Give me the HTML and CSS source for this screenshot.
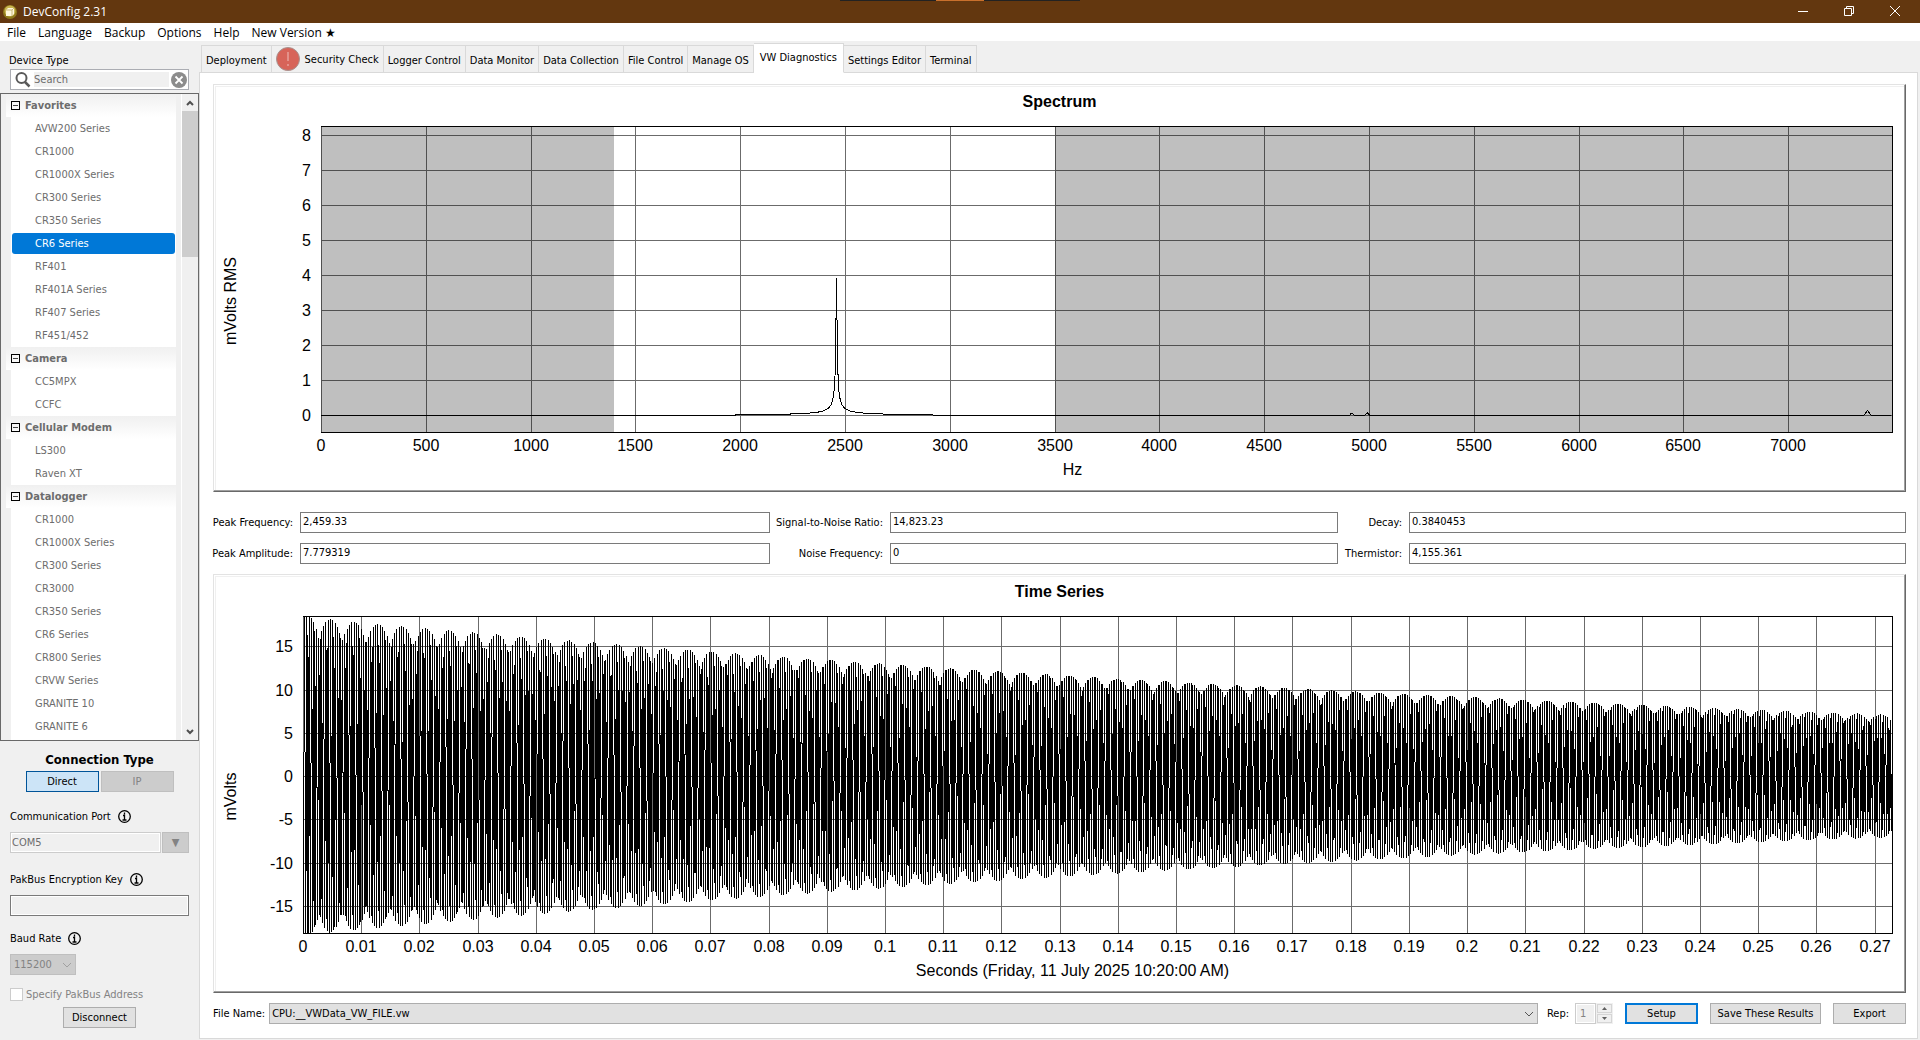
FILE: index.html
```html
<!DOCTYPE html>
<html lang="en">

<head>
  <meta charset="UTF-8" />
  <title>DevConfig 2.31</title>
  <link rel="stylesheet" href="styles.css">
</head>

<body>
  <!-- title bar -->
  <header class="titlebar">
    <svg class="app-icon" width="14" height="14" viewBox="0 0 14 14">
      <circle cx="7" cy="7" r="7" fill="#8f7a1c" />
      <circle cx="7" cy="6" r="5.5" fill="#c9b552" />
      <path d="M3 5l2-2h6v6l-2 2H3z" fill="#fff8dc" />
      <path d="M3 5h6v6M9 5l2-2" fill="none" stroke="#b9a660" stroke-width="0.8" />
    </svg>
    <span class="app-name">DevConfig 2.31</span>
    <div class="snap"></div>
    <div class="win-buttons">
      <button type="button" aria-label="Minimize"><svg width="10" height="10" viewBox="0 0 10 10"><path d="M0 5.5h10" /></svg></button>
      <button type="button" aria-label="Restore"><svg width="10" height="10" viewBox="0 0 10 10"><path d="M.5 2.5h7v7h-7zM2.5 2.5v-2h7v7h-2" /></svg></button>
      <button type="button" aria-label="Close"><svg width="10" height="10" viewBox="0 0 10 10"><path d="M0 0l10 10M10 0L0 10" /></svg></button>
    </div>
  </header>

  <nav class="menubar">
    <a href="#">File</a>
    <a href="#">Language</a>
    <a href="#">Backup</a>
    <a href="#">Options</a>
    <a href="#">Help</a>
    <a href="#">New Version ★</a>
  </nav>

  <div class="main">
    <aside class="sidebar">
      <label class="side-label" for="search">Device Type</label>
      <div class="search">
        <svg width="18" height="18" viewBox="0 0 18 18">
          <circle cx="7.500" cy="7" r="5" fill="none" stroke="#5a5a5a" stroke-width="2" />
          <path d="M11 11l4.500 4.500" stroke="#5a5a5a" stroke-width="2.500" />
        </svg>
        <input id="search" type="text" placeholder="Search" disabled>
        <button type="button" aria-label="Clear search" disabled>
          <svg width="16" height="16" viewBox="0 0 16 16">
            <circle cx="8" cy="8" r="8" fill="#8c8c8c" />
            <path d="M4.500 4.500l7 7M11.500 4.500l-7 7" stroke="#fff" stroke-width="1.800" />
          </svg>
        </button>
      </div>

      <div class="tree">
        <div class="tree-list">
          <h3><i></i>Favorites</h3>
          <ul>
            <li>AVW200 Series</li>
            <li>CR1000</li>
            <li>CR1000X Series</li>
            <li>CR300 Series</li>
            <li>CR350 Series</li>
            <li class="current">CR6 Series</li>
            <li>RF401</li>
            <li>RF401A Series</li>
            <li>RF407 Series</li>
            <li>RF451/452</li>
          </ul>
          <h3><i></i>Camera</h3>
          <ul>
            <li>CC5MPX</li>
            <li>CCFC</li>
          </ul>
          <h3><i></i>Cellular Modem</h3>
          <ul>
            <li>LS300</li>
            <li>Raven XT</li>
          </ul>
          <h3><i></i>Datalogger</h3>
          <ul class="last">
            <li>CR1000</li>
            <li>CR1000X Series</li>
            <li>CR300 Series</li>
            <li>CR3000</li>
            <li>CR350 Series</li>
            <li>CR6 Series</li>
            <li>CR800 Series</li>
            <li>CRVW Series</li>
            <li>GRANITE 10</li>
            <li>GRANITE 6</li>
          </ul>
        </div>
        <div class="scrollbar">
          <button type="button" aria-label="Scroll up"><svg width="8" height="6" viewBox="0 0 8 6"><path d="M1 5l3-3 3 3" /></svg></button>
          <div class="thumb"></div>
          <button type="button" aria-label="Scroll down"><svg width="8" height="6" viewBox="0 0 8 6"><path d="M1 1l3 3 3-3" /></svg></button>
        </div>
      </div>

      <div class="connection">
        <h2>Connection Type</h2>
        <div class="toggle">
          <button type="button" class="btn on">Direct</button>
          <button type="button" class="btn off" disabled>IP</button>
        </div>

        <div class="caption">
          <label for="port">Communication Port</label>
          <svg class="info" width="13" height="13" viewBox="0 0 13 13"><circle cx="6.500" cy="6.500" r="5.800" /><path d="M6.500 2.500v2M5 5.500h1.500v4.500M4.500 10h4" /></svg>
        </div>
        <div class="port">
          <input id="port" type="text" value="COM5" disabled>
          <button type="button" aria-label="Choose port" disabled>▼</button>
        </div>

        <div class="caption">
          <label for="key">PakBus Encryption Key</label>
          <svg class="info" width="13" height="13" viewBox="0 0 13 13"><circle cx="6.500" cy="6.500" r="5.800" /><path d="M6.500 2.500v2M5 5.500h1.500v4.500M4.500 10h4" /></svg>
        </div>
        <input id="key" class="key" type="text">

        <div class="caption baud-caption">
          <label for="baud">Baud Rate</label>
          <svg class="info" width="13" height="13" viewBox="0 0 13 13"><circle cx="6.500" cy="6.500" r="5.800" /><path d="M6.500 2.500v2M5 5.500h1.500v4.500M4.500 10h4" /></svg>
        </div>
        <div class="drop baud">
          <select id="baud" disabled><option>115200</option></select>
          <svg width="10" height="6" viewBox="0 0 10 6"><path d="M1 1l4 4 4-4" /></svg>
        </div>

        <label class="check"><input type="checkbox" disabled>Specify PakBus Address</label>
        <button type="button" class="btn disconnect">Disconnect</button>
      </div>
    </aside>

    <section class="content">
      <div class="tabs">
        <button type="button">Deployment</button>
        <button type="button" class="warn">
          <svg width="24" height="24" viewBox="0 0 24 24">
            <circle cx="12" cy="12" r="11.500" fill="#d76459" stroke="#a8928f" />
            <path d="M12 5v9M12 17v2" stroke="#e8a19a" stroke-width="1.500" />
          </svg>
          Security Check
        </button>
        <button type="button">Logger Control</button>
        <button type="button">Data Monitor</button>
        <button type="button">Data Collection</button>
        <button type="button">File Control</button>
        <button type="button">Manage OS</button>
        <button type="button" class="current">VW Diagnostics</button>
        <button type="button">Settings Editor</button>
        <button type="button">Terminal</button>
      </div>

      <div class="pane">
        <div class="chart spectrum"><svg id="spectrum"></svg></div>

        <div class="readings">
          <label for="freq">Peak Frequency:</label><input id="freq" type="text" value="2,459.33" readonly>
          <label for="snr">Signal-to-Noise Ratio:</label><input id="snr" type="text" value="14,823.23" readonly>
          <label for="decay">Decay:</label><input id="decay" type="text" value="0.3840453" readonly>
          <label for="ampl">Peak Amplitude:</label><input id="ampl" type="text" value="7.779319" readonly>
          <label for="noise">Noise Frequency:</label><input id="noise" type="text" value="0" readonly>
          <label for="therm">Thermistor:</label><input id="therm" type="text" value="4,155.361" readonly>
        </div>

        <div class="chart series"><svg id="series"></svg></div>

        <div class="footer">
          <label for="file">File Name:</label>
          <div class="drop file">
            <select id="file"><option>CPU:__VWData_VW_FILE.vw</option></select>
            <svg width="10" height="6" viewBox="0 0 10 6"><path d="M1 1l4 4 4-4" /></svg>
          </div>
          <label for="rep">Rep:</label>
          <div class="spin">
            <input id="rep" type="number" value="1" disabled>
            <div>
              <button type="button" aria-label="Next rep" disabled><svg width="5" height="3" viewBox="0 0 5 3"><path d="M0 3l2.500-3L5 3z" /></svg></button>
              <button type="button" aria-label="Previous rep" disabled><svg width="5" height="3" viewBox="0 0 5 3"><path d="M0 0l2.500 3L5 0z" /></svg></button>
            </div>
          </div>
          <button type="button" class="btn primary">Setup</button>
          <button type="button" class="btn save">Save These Results</button>
          <button type="button" class="btn">Export</button>
        </div>
      </div>
    </section>
  </div>
  <script src="charts.js"></script>
</body>

</html>
```
FILE: styles.css
```css
* {
  box-sizing: border-box;
  margin: 0;
  padding: 0;
}

body {
  display: flex;
  flex-direction: column;
  height: 100vh;
  overflow: hidden;
  background: #f0f0f0;
  color: #000;
  font: 11px/13px "DejaVu Sans Condensed", "Noto Sans", sans-serif;
}

button,
input,
select {
  font: inherit;
  color: inherit;
  border-radius: 0;
}

ul {
  list-style: none;
}

/* title bar */
.titlebar {
  display: flex;
  align-items: center;
  height: 23px;
  padding-left: 3px;
  background: #63370f;
  color: #fff;
  font: 12px/16px "Open Sans", sans-serif;
  position: relative;
}

.app-name {
  flex: 1;
  margin-left: 6px;
}

.snap {
  position: absolute;
  top: 0;
  left: 43.75%;
  width: 240px;
  height: 1px;
  background: linear-gradient(90deg, #222 96px, #c9702c 96px, #c9702c 144px, #222 144px);
}

.win-buttons {
  display: flex;
  padding-right: 2px;
}

.win-buttons button {
  width: 46px;
  height: 23px;
  padding-bottom: 2px;
  background: none;
  border: 0;
}

.win-buttons svg {
  fill: none;
  stroke: #fff;
  display: block;
  margin: 0 auto;
}

/* menu */
.menubar {
  display: flex;
  gap: 12px;
  height: 18px;
  padding-left: 7px;
  background: #fff;
  font: 12px/19px "Open Sans", "DejaVu Sans", sans-serif;
}

.menubar a {
  color: #000;
  text-decoration: none;
}

.main {
  display: flex;
  flex: 1;
  min-height: 0;
}

/* left column */
.sidebar {
  display: flex;
  flex-direction: column;
  width: 199px;
}

.side-label {
  padding: 13px 0 2px 9px;
}

.search {
  display: flex;
  align-items: center;
  height: 21px;
  margin: 0 10px 3px;
  padding: 0 1px 0 3px;
  background: #fff;
  border: 1px solid #abadb3;
}

.search input {
  flex: 1;
  width: 0;
  height: 15px;
  margin: 0 2px;
  border: 0;
  background: #f0f0f0;
}

.search input::placeholder {
  color: #6d6d6d;
}

.search button {
  border: 0;
  background: none;
  height: 16px;
}

.tree {
  display: flex;
  flex: 1;
  min-height: 0;
  border: 1px solid #696969;
}

.tree-list {
  display: flex;
  flex-direction: column;
  flex: 1;
  margin: 0 5px;
  color: #6d6d6d;
  line-height: 23px;
  overflow: hidden;
}

.tree-list h3 {
  display: flex;
  align-items: center;
  flex: none;
  height: 23px;
  padding-left: 5px;
  background: linear-gradient(#f0f0f0, #fff);
  font-size: 11px;
  font-weight: bold;
}

.tree-list i {
  width: 9px;
  height: 9px;
  margin-right: 5px;
  border: 1px solid #000;
  background: linear-gradient(#444, #444) center / 5px 1px no-repeat;
}

.tree-list ul {
  margin-left: 5px;
  background: #fff;
}

.tree-list .last {
  flex: 1;
}

.tree-list li {
  height: 23px;
  padding-left: 24px;
}

.tree-list li.current {
  height: 21px;
  margin: 1px;
  padding-left: 23px;
  line-height: 21px;
  border-radius: 3px;
  background: #0078d7;
  color: #fff;
}

.scrollbar {
  display: flex;
  flex-direction: column;
  justify-content: space-between;
  width: 17px;
  border-left: 1px solid #fff;
}

.scrollbar button {
  height: 17px;
  border: 0;
  background: none;
}

.scrollbar svg {
  display: block;
  margin: 0 auto;
  fill: none;
  stroke: #505050;
  stroke-width: 2;
}

.thumb {
  height: 146px;
  margin-bottom: auto;
  background: #cdcdcd;
}

/* connection settings */
.connection {
  display: flex;
  flex-direction: column;
  padding: 11px 10px 12px;
}

.connection h2 {
  font-size: 13px;
  line-height: 15px;
  text-align: center;
}

.btn {
  height: 21px;
  min-width: 73px;
  border: 1px solid #adadad;
  background: #e1e1e1;
}

.btn.on {
  border-color: #005499;
  background: #cce4f7;
}

.btn.off {
  border-color: #bfbfbf;
  background: #ccc;
  color: #838383;
}

.btn.primary {
  border: 2px solid #0078d7;
}

.toggle {
  display: flex;
  justify-content: center;
  gap: 2px;
  margin: 4px 0 17px;
}

.caption {
  display: flex;
  align-items: center;
  gap: 7px;
  height: 15px;
  margin-bottom: 8px;
}

.info {
  fill: none;
  stroke: #000;
  stroke-width: 1.3;
}

.port {
  display: flex;
  gap: 1px;
  margin-bottom: 19px;
}

.port input {
  flex: 1;
  width: 0;
  height: 21px;
  padding-left: 1px;
  border: 1px solid #ccc;
  background: #f0f0f0;
  color: #6d6d6d;
  box-shadow: inset 0 0 0 1px #fff;
}

.port button {
  width: 27px;
  border: 1px solid #bfbfbf;
  background: #ccc;
  color: #838383;
}

.key {
  height: 21px;
  border: 1px solid #7a7a7a;
  background: #f0f0f0;
  box-shadow: inset 0 0 0 1px #fff;
}

.baud-caption {
  margin-top: 15px;
}

/* drop-downs */
.drop {
  display: grid;
  align-items: center;
}

.drop select,
.drop svg {
  grid-area: 1 / 1;
}

.drop select {
  appearance: none;
  width: 100%;
  height: 21px;
  padding-left: 3px;
  border: 1px solid #adadad;
  background: #e1e1e1;
}

.drop svg {
  justify-self: end;
  margin-right: 4px;
  fill: none;
  stroke: #555;
  pointer-events: none;
}

.baud {
  width: 66px;
  margin-bottom: 13px;
}

.baud select {
  border-color: #bfbfbf;
  background: #ccc;
  color: #838383;
  opacity: 1;
}

.baud svg {
  stroke: #a0a0a0;
}

.check {
  display: flex;
  align-items: center;
  gap: 3px;
  color: #838383;
}

.check input {
  appearance: none;
  width: 13px;
  height: 13px;
  border: 1px solid #ccc;
  background: #fff;
}

.disconnect {
  align-self: center;
  margin-top: 6px;
}

/* tabs */
.content {
  display: flex;
  flex-direction: column;
  flex: 1;
  min-width: 0;
  padding: 2px 2px 1px 0;
}

.tabs {
  display: flex;
  align-items: flex-end;
  padding-left: 2px;
}

.tabs button {
  height: 28px;
  margin-bottom: -1px;
  padding: 3px 4px 0;
  border: 1px solid #d9d9d9;
  border-left-width: 0;
  background: #f0f0f0;
  white-space: nowrap;
}

.tabs button:first-child {
  border-left-width: 1px;
}

.tabs .warn {
  display: flex;
  align-items: center;
  gap: 5px;
  padding: 0 4px;
}

.tabs .current {
  height: 30px;
  padding: 0 6px 1px;
  border-bottom-color: #fff;
  background: #fff;
  z-index: 1;
}

.pane {
  display: flex;
  flex-direction: column;
  flex: 1;
  min-height: 0;
  padding: 11px 11px 14px 13px;
  border: 1px solid #d9d9d9;
  background: #fff;
}

/* charts */
.chart {
  min-height: 0;
  border: 1px solid #e3e3e3;
  border-right-color: #696969;
  border-bottom-color: #696969;
  box-shadow: inset -1px -1px #a0a0a0, inset 1px 1px #fff, inset 2px 2px #f0f0f0;
}

.spectrum {
  flex: 407 1 0;
}

.series {
  flex: 419 1 0;
}

.chart svg {
  display: block;
  width: 100%;
  height: 100%;
  font: 16px "Liberation Sans", sans-serif;
}

.chart-title {
  font-weight: bold;
}

.grid {
  fill: none;
  stroke: #6b6b6b;
  shape-rendering: crispEdges;
}

.band {
  fill: #000;
  opacity: 0.25;
  shape-rendering: crispEdges;
}

.frame,
.trace {
  fill: none;
  stroke: #000;
  shape-rendering: crispEdges;
}

/* results */
.readings {
  display: grid;
  grid-template-columns: 81px 470fr 106px 448fr 57px 497fr;
  align-items: center;
  gap: 10px 7px;
  margin: 20px 0 10px -1px;
}

.readings label {
  justify-self: end;
  white-space: nowrap;
}

.readings input {
  width: 100%;
  height: 21px;
  padding: 0 2px 2px;
  border: 1px solid #7a7a7a;
}

.footer {
  display: flex;
  align-items: center;
  gap: 12px;
  margin-top: 10px;
}

.file {
  flex: 1;
  margin: 0 -3px 0 -8px;
}

.file select {
  padding-left: 2px;
}

.spin {
  display: flex;
  height: 21px;
  margin-left: -6px;
}

.spin input {
  appearance: textfield;
  width: 21px;
  padding-left: 4px;
  border: 1px solid #ccc;
  background: #f0f0f0;
  color: #838383;
  box-shadow: inset 0 0 0 1px #fff;
}

.spin input::-webkit-inner-spin-button {
  appearance: none;
}

.spin div {
  display: grid;
  width: 17px;
  background: #f0f0f0;
  gap: 1px;
  padding: 1px;
}

.spin button {
  display: grid;
  place-items: center;
  border: 1px solid #d5d5d5;
  background: #f0f0f0;
}

.spin svg {
  fill: #606060;
}

.save {
  width: 111px;
}
```
FILE: charts.js
```js
var NS = "http://www.w3.org/2000/svg";

// append an svg element to parent
function add(parent, name, attrs, text) {
  var el = document.createElementNS(NS, name);
  for (var key in attrs) {
    el.setAttribute(key, attrs[key]);
  }
  if (text !== undefined) {
    el.textContent = text;
  }
  parent.appendChild(el);
  return el;
}

function drawChart(id, opt) {
  var svg = document.getElementById(id);
  svg.innerHTML = "";
  var w = svg.clientWidth;
  var h = svg.clientHeight;
  var left = opt.left;
  var right = w - 13;
  var top = 41;
  var bottom = h - 59;

  function px(v) {
    return left + (v / opt.xMax) * (right - left);
  }
  function py(v) {
    return bottom - ((v - opt.yMin) / (opt.yMax - opt.yMin)) * (bottom - top);
  }

  // grid lines and tick labels
  var d = "";
  for (var i = 0; i * opt.xStep <= opt.xMax; i++) {
    var x = Math.round(px(i * opt.xStep));
    d += "M" + (x + 0.5) + " " + top + "V" + bottom;
    add(svg, "text", { x: x, y: bottom + 19, "text-anchor": "middle" }, +(i * opt.xStep).toFixed(2));
  }
  for (var v = opt.yFirst; v <= opt.yMax; v += opt.yStep) {
    var y = Math.round(py(v));
    d += "M" + left + " " + (y + 0.5) + "H" + right;
    add(svg, "text", { x: left - 10, y: y + 6, "text-anchor": "end" }, v);
  }
  add(svg, "path", { d: d, "class": "grid" });

  // shaded ranges outside of the sweep
  opt.bands.forEach(function (b) {
    add(svg, "rect", { x: px(b[0]), y: top, width: px(b[1]) - px(b[0]), height: bottom - top, "class": "band" });
  });

  var clip = add(svg, "clipPath", { id: id + "-clip" });
  add(clip, "rect", { x: left, y: top, width: right - left, height: bottom - top });
  var points = opt.points().map(function (p) {
    return px(p[0]).toFixed(1) + "," + py(p[1]).toFixed(1);
  });
  add(svg, "polyline", { points: points.join(" "), "class": "trace", "clip-path": "url(#" + id + "-clip)" });
  add(svg, "path", { d: "M" + left + " " + (top + 0.5) + "H" + (right + 0.5) + "V" + (bottom + 0.5) + "H" + left, "class": "frame" });

  // titles
  var middle = (top + bottom) / 2 + 22;
  add(svg, "text", { x: w / 2, y: 22, "text-anchor": "middle", "class": "chart-title" }, opt.title);
  add(svg, "text", { x: w / 2 + 13, y: h - 16, "text-anchor": "middle" }, opt.xTitle);
  add(svg, "text", { x: 0, y: 0, "text-anchor": "middle", transform: "translate(22 " + middle + ") rotate(-90)" }, opt.yTitle);
}

// single narrow peak with long skirts
function spectrumPoints() {
  var list = [];
  for (var f = 0; f <= 7495; f += 3.66) {
    var v = Math.min(3.92, 7.9 / Math.abs(f - 2459.33));
    if (f > 1980 && f < 2920) {
      v = Math.max(v, 0.03);
    } else {
      v = 0;
    }
    v += Math.max(0, 0.07 - Math.abs(f - 4918) / 150);
    v += Math.max(0, 0.07 - Math.abs(f - 4992) / 150);
    v += Math.max(0, 0.14 - Math.abs(f - 7378) / 120);
    list.push([f, v]);
  }
  return list;
}

// decaying sine sampled at 15 kHz
function seriesPoints() {
  var list = [];
  for (var n = 0; n < 4096; n++) {
    var t = n / 15000;
    var a = n < 40 ? 18.8 : 18.4;
    list.push([t, a * Math.exp(-3.5 * t) * Math.sin(2 * Math.PI * (2459.33 * t + 0.609))]);
  }
  return list;
}

function draw() {
  drawChart("spectrum", {
    title: "Spectrum", xTitle: "Hz", yTitle: "mVolts RMS",
    left: 107,
    xMax: 7495, xStep: 500,
    yMin: -0.48, yMax: 8.27, yFirst: 0, yStep: 1,
    bands: [[0, 1400], [3500, 7495]],
    points: spectrumPoints
  });
  drawChart("series", {
    title: "Time Series", xTitle: "Seconds (Friday, 11 July 2025 10:20:00 AM)", yTitle: "mVolts",
    left: 89,
    xMax: 0.273, xStep: 0.01,
    yMin: -18.15, yMax: 18.5, yFirst: -15, yStep: 5,
    bands: [],
    points: seriesPoints
  });
}

draw();
window.onresize = draw;
```
